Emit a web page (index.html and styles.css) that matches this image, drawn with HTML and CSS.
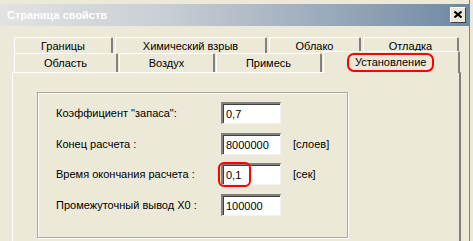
FILE: index.html
```html
<!DOCTYPE html>
<html lang="ru">
<head>
  <meta charset="UTF-8">
  <title>Страница свойств</title>
  <link rel="stylesheet" href="styles.css">
</head>
<body>
  <div class="window">
    <div class="titlebar">
      <span class="title">Страница свойств</span>
      <span class="close">
        <svg width="8" height="7" viewBox="0 0 8 7">
          <path d="M0.5 0.5 L7.5 6.5 M7.5 0.5 L0.5 6.5" stroke="#000" stroke-width="2" fill="none"/>
        </svg>
      </span>
    </div>

    <div class="tabs">
      <div class="tab-row back">
        <div class="tab t-bounds">Границы</div>
        <div class="tab t-chem">Химический взрыв</div>
        <div class="tab t-cloud">Облако</div>
        <div class="tab t-debug">Отладка</div>
      </div>
      <div class="tab-row front">
        <div class="tab t-area">Область</div>
        <div class="tab t-air">Воздух</div>
        <div class="tab t-mix">Примесь</div>
        <div class="tab active t-set"><span class="mark">Установление</span></div>
      </div>
    </div>

    <div class="panel">
      <div class="group">
        <div class="field">
          <label>Коэффициент "запаса":</label>
          <span class="edit">0,7</span>
        </div>
        <div class="field">
          <label>Конец расчета :</label>
          <span class="edit">8000000</span>
          <span class="unit">[слоев]</span>
        </div>
        <div class="field">
          <label>Время окончания расчета :</label>
          <span class="edit"><span class="mark-box"></span>0,1</span>
          <span class="unit">[сек]</span>
        </div>
        <div class="field">
          <label>Промежуточный вывод X0 :</label>
          <span class="edit">100000</span>
        </div>
      </div>
    </div>
  </div>
</body>
</html>
```

FILE: styles.css
```css
body {
  margin: 0;
  background: #ece9d8;
  font-family: 'Liberation Sans', Arial, sans-serif;
  font-size: 11px;
  color: #000;
  overflow: hidden;
}

.window {
  width: 470px;
  height: 241px;
  padding-top: 4px;
  border-right: 1px solid #808080;
  background: #ece9d8;
  box-sizing: border-box;
}

.titlebar {
  height: 22px;
  display: flex;
  align-items: center;
  justify-content: space-between;
  padding: 0 3px 0 7px;
  background: linear-gradient(to right, #e2e2e2 0%, #c8cfd4 35%, #9aaabb 70%, #6e89a2 100%);
}

.title {
  color: #fff;
  font-weight: bold;
  font-size: 11px;
}

.close {
  width: 16px;
  height: 16px;
  margin-top: -1px;
  box-sizing: border-box;
  display: flex;
  align-items: center;
  justify-content: center;
  background: #ece9d8;
  border: 1px solid;
  border-color: #fff #404040 #404040 #fff;
}

.close svg { display: block; }

.tabs {
  padding-top: 11px;
  height: 35px;
  position: relative;
}

.tab-row {
  display: flex;
  height: 16px;
  margin-left: 14px;
}

.tab-row.front {
  height: 19px;
}

.tab {
  box-sizing: border-box;
  height: 100%;
  border: 1px solid #fff;
  border-bottom: none;
  border-right: 2px solid #808080;
  border-radius: 2px 2px 0 0;
  background: #ece9d8;
  text-align: center;
  line-height: 17px;
}

.front .tab { line-height: 19px; }

.back .tab { margin-right: 2px; }
.t-bounds { width: 99px; }
.t-chem { width: 152px; margin-right: 1px; }
.t-cloud { width: 92px; }
.t-debug { width: 96px; }

.front .tab { margin-right: 1px; }
.t-area { width: 104px; }
.t-air { width: 96px; margin-right: 2px; }
.t-mix { width: 106px; margin-right: 0; }

.front .tab.active {
  width: 137px;
  height: 22px;
  margin-top: -2px;
  position: relative;
  z-index: 1;
  padding: 1px 0 0 23px;
  text-align: left;
  line-height: 15px;
}

.mark {
  display: inline-block;
  padding: 0 6px;
  line-height: 15px;
  border: 2px solid #f00;
  border-radius: 7px;
}

.panel {
  margin-left: 12px;
  width: 449px;
  height: 170px;
  box-sizing: border-box;
  border-left: 1px solid #fff;
  border-top: 1px solid #fff;
  border-right: 2px solid #808080;
  padding: 19px 0 0 24px;
}

.group {
  width: 311px;
  height: 146px;
  box-sizing: border-box;
  border: 1px solid #aca899;
  box-shadow: inset 1px 1px 0 #fff, 1px 1px 0 #fff;
  padding: 9px 0 0 18px;
  display: flex;
  flex-direction: column;
  gap: 9px;
}

.field {
  display: flex;
  align-items: center;
  height: 22px;
}

.field:nth-child(3) { margin-top: -1px; }

.field label {
  width: 165px;
}

.edit {
  position: relative;
  width: 60px;
  height: 22px;
  box-sizing: border-box;
  background: #fff;
  border-top: 2px solid #808080;
  border-left: 2px solid #808080;
  border-right: 1px solid #f4f3ee;
  border-bottom: 1px solid #f4f3ee;
  box-shadow: inset 1px 1px 0 #404040;
  padding: 3px 0 0 3px;
  line-height: 14px;
  font-size: 11px;
}

.unit {
  margin-left: 12px;
}

.mark-box {
  position: absolute;
  left: -5px;
  top: -3px;
  width: 33px;
  height: 25px;
  box-sizing: border-box;
  border: 2px solid #f00;
  border-radius: 6px;
}
```
